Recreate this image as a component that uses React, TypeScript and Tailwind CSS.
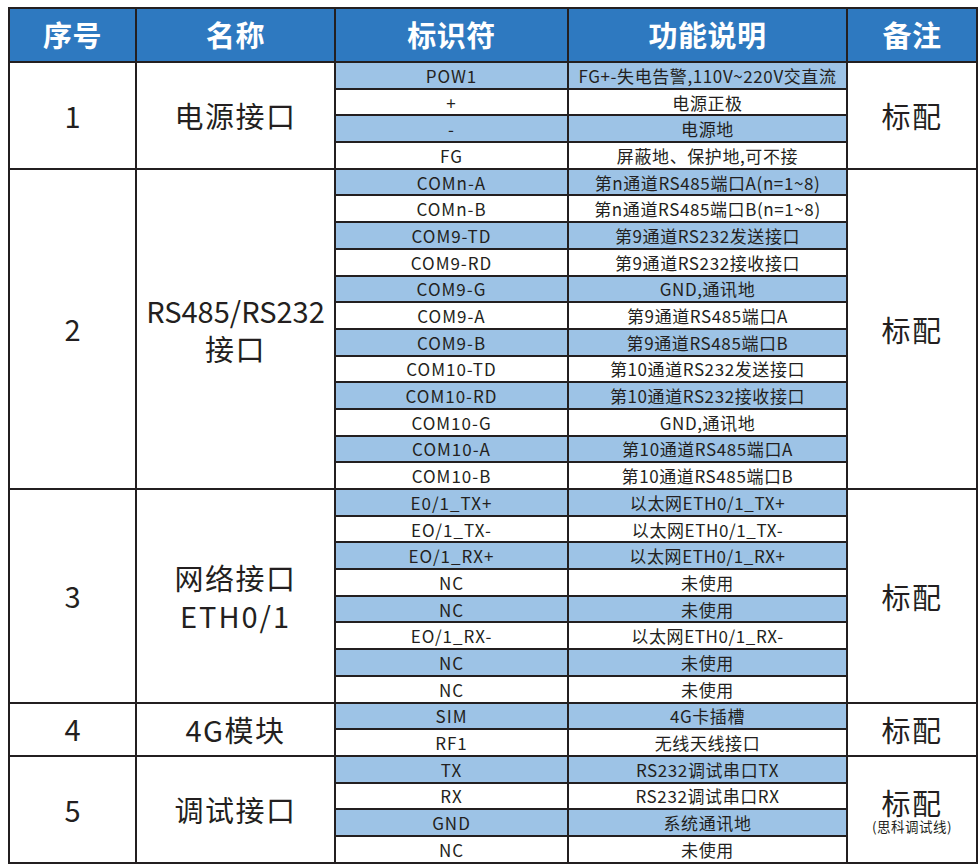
const groups = [
  {
    no: "1",
    name: [["电源接口", "tracking-[1.5px]"]],
    rows: [
      ["POW1", "FG+-失电告警,110V~220V交直流"],
      ["+", "电源正极"],
      ["-", "电源地"],
      ["FG", "屏蔽地、保护地,可不接"],
    ],
  },
  {
    no: "2",
    name: [
      ["RS485/RS232", "tracking-normal"],
      ["接口", "tracking-[1.5px]"],
    ],
    rows: [
      ["COMn-A", "第n通道RS485端口A(n=1~8)"],
      ["COMn-B", "第n通道RS485端口B(n=1~8)"],
      ["COM9-TD", "第9通道RS232发送接口"],
      ["COM9-RD", "第9通道RS232接收接口"],
      ["COM9-G", "GND,通讯地"],
      ["COM9-A", "第9通道RS485端口A"],
      ["COM9-B", "第9通道RS485端口B"],
      ["COM10-TD", "第10通道RS232发送接口"],
      ["COM10-RD", "第10通道RS232接收接口"],
      ["COM10-G", "GND,通讯地"],
      ["COM10-A", "第10通道RS485端口A"],
      ["COM10-B", "第10通道RS485端口B"],
    ],
  },
  {
    no: "3",
    name: [
      ["网络接口", "tracking-[1.5px]"],
      ["ETH0/1", "tracking-[2px]"],
    ],
    rows: [
      ["E0/1_TX+", "以太网ETH0/1_TX+"],
      ["EO/1_TX-", "以太网ETH0/1_TX-"],
      ["EO/1_RX+", "以太网ETH0/1_RX+"],
      ["NC", "未使用"],
      ["NC", "未使用"],
      ["EO/1_RX-", "以太网ETH0/1_RX-"],
      ["NC", "未使用"],
      ["NC", "未使用"],
    ],
  },
  {
    no: "4",
    name: [["4G模块", "tracking-[1.5px]"]],
    rows: [
      ["SIM", "4G卡插槽"],
      ["RF1", "无线天线接口"],
    ],
  },
  {
    no: "5",
    name: [["调试接口", "tracking-[1.5px]"]],
    note: "(思科调试线)",
    rows: [
      ["TX", "RS232调试串口TX"],
      ["RX", "RS232调试串口RX"],
      ["GND", "系统通讯地"],
      ["NC", "未使用"],
    ],
  },
];

export default function App() {
  let idx = 0;
  const cell = "border-2 border-[#231f20] text-center align-middle p-0";

  return (
    <div className="w-[980px] h-[867px] bg-white pt-[7px] pl-[8px] font-['Noto_Sans_CJK_SC',sans-serif] text-[#231f20]">
      <table className="table-fixed border-collapse w-[968px]">
        <colgroup>
          <col className="w-[127px]" />
          <col className="w-[199px]" />
          <col className="w-[233px]" />
          <col className="w-[279px]" />
          <col className="w-[130px]" />
        </colgroup>
        <thead>
          <tr className="h-[54px] bg-[#2e79c0] text-white text-[29px] font-bold tracking-[0.5px]">
            <th className={cell}>序号</th>
            <th className={cell}>名称</th>
            <th className={cell}>标识符</th>
            <th className={cell}>功能说明</th>
            <th className={cell}>备注</th>
          </tr>
        </thead>
        <tbody>
          {groups.map((g) =>
            g.rows.map((r, i) => {
              const blue = idx++ % 2 === 0;
              const bg = blue ? "bg-[#9dc3e6]" : "bg-white";
              return (
                <tr key={g.no + "-" + i} className="h-[26.7px]">
                  {i === 0 && (
                    <>
                      <td rowSpan={g.rows.length} className={`${cell} text-[29px]`}>
                        {g.no}
                      </td>
                      <td rowSpan={g.rows.length} className={`${cell} text-[29px] leading-[38px]`}>
                        {g.name.map(([n, t]) => (
                          <div key={n} className={t}>
                            {n}
                          </div>
                        ))}
                      </td>
                    </>
                  )}
                  <td className={`${cell} ${bg} text-[17px] leading-none tracking-[1px]`}>{r[0]}</td>
                  <td className={`${cell} ${bg} text-[17px] leading-none tracking-[0.6px]`}>{r[1]}</td>
                  {i === 0 && (
                    <td rowSpan={g.rows.length} className={`${cell} text-[29px] tracking-[1.5px]`}>
                      <div className={g.note ? "leading-[28px] pt-[4px]" : "leading-[34px]"}>标配</div>
                      {g.note && (
                        <div className="text-[13.5px] leading-[16px] mt-[2px] tracking-[0.5px]">{g.note}</div>
                      )}
                    </td>
                  )}
                </tr>
              );
            })
          )}
        </tbody>
      </table>
    </div>
  );
}
